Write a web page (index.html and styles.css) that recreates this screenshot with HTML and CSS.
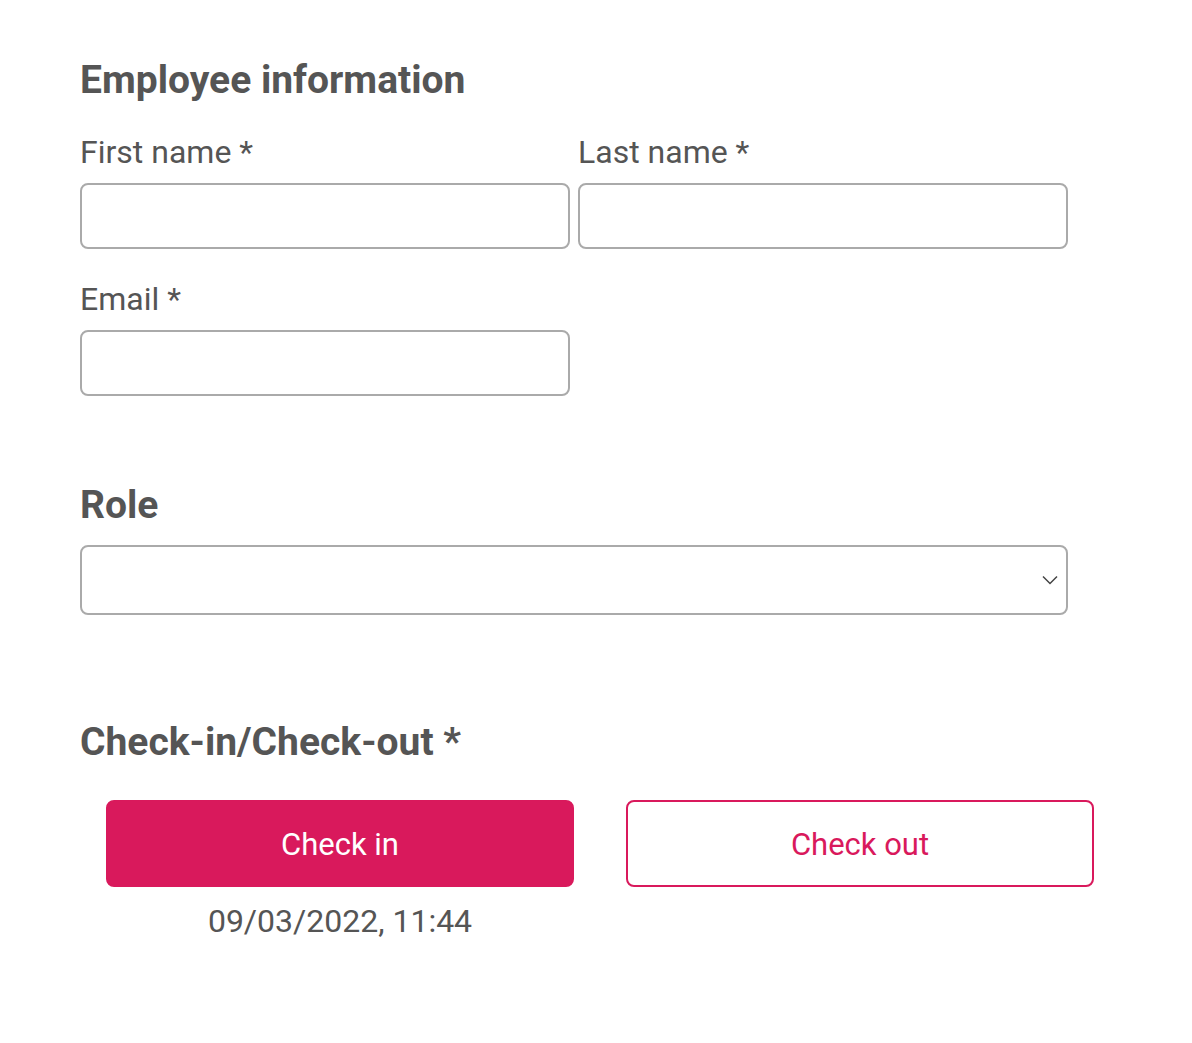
FILE: index.html
```html
<!DOCTYPE html>
<html lang="en">
<head>
<meta charset="utf-8">
<title>Employee form</title>
<link rel="stylesheet" href="styles.css">
</head>
<body>
<form class="form">
  <section class="section">
    <h2 class="heading">Employee information</h2>
    <div class="row">
      <div class="field">
        <label class="label">First name *</label>
        <input class="input" type="text">
      </div>
      <div class="field">
        <label class="label">Last name *</label>
        <input class="input" type="text">
      </div>
    </div>
    <div class="row">
      <div class="field">
        <label class="label">Email *</label>
        <input class="input" type="text">
      </div>
    </div>
  </section>
  <section class="section section-role">
    <h2 class="heading">Role</h2>
    <div class="select">
      <svg class="chevron" viewBox="0 0 16 10" width="16" height="10"><path d="M1 1.5 L8 8.5 L15 1.5" fill="none" stroke="#444" stroke-width="1.5"/></svg>
    </div>
  </section>
  <section class="section section-check">
    <h2 class="heading">Check-in/Check-out *</h2>
    <div class="buttons">
      <div class="btn-col">
        <button type="button" class="btn btn-primary">Check in</button>
        <div class="stamp">09/03/2022, 11:44</div>
      </div>
      <div class="btn-col">
        <button type="button" class="btn btn-outline">Check out</button>
      </div>
    </div>
  </section>
</form>
</body>
</html>
```
FILE: styles.css
```css
* { box-sizing: border-box; }
body {
  margin: 0;
  background: #fff;
  font-family: Roboto, "Liberation Sans", sans-serif;
  color: #555;
}
.form {
  padding: 58px 0 0 80px;
  width: 1100px;
}
.heading {
  margin: 0;
  font-size: 39px;
  font-weight: 700;
  line-height: 44px;
  color: #555;
}
.row {
  display: flex;
  gap: 8px;
}
.field {
  display: flex;
  flex-direction: column;
  width: 490px;
}
.label {
  font-size: 32px;
  line-height: 38px;
  margin-top: 31px;
  margin-bottom: 12px;
}
.input {
  height: 66px;
  border: 2px solid #aaa;
  border-radius: 8px;
  background: #fff;
}
.section-role { margin-top: 87px; }
.select {
  margin-top: 18px;
  width: 988px;
  height: 70px;
  border: 2px solid #aaa;
  border-radius: 8px;
  display: flex;
  align-items: center;
  justify-content: flex-end;
  padding-right: 8px;
}
.section-check { margin-top: 105px; }
.buttons {
  display: flex;
  gap: 52px;
  margin-top: 36px;
  padding-left: 26px;
}
.btn-col {
  display: flex;
  flex-direction: column;
  align-items: center;
  width: 468px;
}
.btn {
  width: 100%;
  height: 87px;
  border-radius: 8px;
  font-family: Roboto, "Liberation Sans", sans-serif;
  font-size: 31px;
  padding-top: 2px;
  cursor: pointer;
}
.btn-primary {
  background: #d9195c;
  border: 2px solid #d9195c;
  color: #fff;
}
.btn-outline {
  background: #fff;
  border: 2px solid #d9195c;
  color: #d9195c;
}
.stamp {
  margin-top: 15px;
  font-size: 32px;
  line-height: 38px;
  color: #555;
}
```
